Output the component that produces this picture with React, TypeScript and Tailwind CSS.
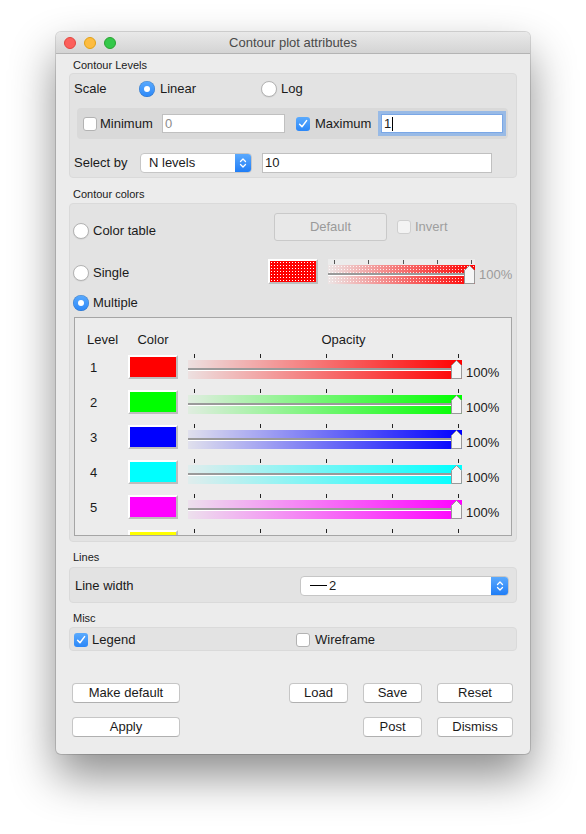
import React from "react";

const levels = [
  { n: 1, swatch: "bg-[#ff0000]", bar: "from-[rgba(255,0,0,0.05)] to-[#ff0000]" },
  { n: 2, swatch: "bg-[#00ff00]", bar: "from-[rgba(0,255,0,0.05)] to-[#00ff00]" },
  { n: 3, swatch: "bg-[#0000ff]", bar: "from-[rgba(0,0,255,0.05)] to-[#0000ff]" },
  { n: 4, swatch: "bg-[#00ffff]", bar: "from-[rgba(0,255,255,0.05)] to-[#00ffff]" },
  { n: 5, swatch: "bg-[#ff00ff]", bar: "from-[rgba(255,0,255,0.05)] to-[#ff00ff]" },
  { n: 6, swatch: "bg-[#ffff00]", bar: "from-[rgba(255,255,0,0.05)] to-[#ffff00]" },
];

function Radio({ checked }: { checked?: boolean }) {
  if (checked) {
    return (
      <span className="flex h-[16px] w-[16px] shrink-0 items-center justify-center rounded-full bg-linear-to-b from-[#5aaafd] to-[#2a87f8] shadow-[inset_0_0_0_0.5px_rgba(0,0,0,0.2)]">
        <span className="h-[6px] w-[6px] rounded-full bg-white" />
      </span>
    );
  }
  return <span className="h-[16px] w-[16px] shrink-0 rounded-full border border-[#b3b3b3] bg-white shadow-[0_0.5px_1px_rgba(0,0,0,0.1)]" />;
}

function Check({ checked, disabled }: { checked?: boolean; disabled?: boolean }) {
  if (checked) {
    return (
      <span className="flex h-[14px] w-[14px] shrink-0 items-center justify-center rounded-[3px] bg-linear-to-b from-[#5aaafd] to-[#2a87f8]">
        <svg width="10" height="10" viewBox="0 0 10 10">
          <path d="M1.6 5.2 L4 7.8 L8.6 1.6" fill="none" stroke="#fff" strokeWidth="1.5" strokeLinecap="round" strokeLinejoin="round" />
        </svg>
      </span>
    );
  }
  return (
    <span
      className={
        disabled
          ? "h-[14px] w-[14px] shrink-0 rounded-[3px] border border-[#cfcfcf] bg-[#f3f3f3]"
          : "h-[14px] w-[14px] shrink-0 rounded-[3px] border border-[#b3b3b3] bg-white"
      }
    />
  );
}

function Chevrons() {
  return (
    <svg width="8" height="12" viewBox="0 0 8 12">
      <path d="M1.5 4.5 L4 2 L6.5 4.5 M1.5 7.5 L4 10 L6.5 7.5" fill="none" stroke="#fff" strokeWidth="1.3" strokeLinecap="round" strokeLinejoin="round" />
    </svg>
  );
}

function Handle() {
  return (
    <svg width="11" height="19" viewBox="0 0 11 19" className="absolute right-0 top-0">
      <path d="M0.5 5.5 L5.5 0.5 L10.5 5.5 V18.5 H0.5 Z" fill="#f6f6f6" stroke="#999" strokeWidth="1" />
    </svg>
  );
}

function Ticks() {
  return (
    <div className="flex h-[4px] justify-between pl-[6px] pr-[3px]">
      <span className="w-px bg-[#222]" />
      <span className="w-px bg-[#222]" />
      <span className="w-px bg-[#222]" />
      <span className="w-px bg-[#222]" />
      <span className="w-px bg-[#222]" />
    </div>
  );
}

function Button({ label, w, disabled }: { label: string; w: string; disabled?: boolean }) {
  return (
    <div
      className={
        disabled
          ? `${w} flex h-[28px] items-center justify-center rounded-[3px] border border-[#c9c9c9] bg-[#e8e8e8] text-[#9a9a9a]`
          : `${w} flex h-[20px] items-center justify-center rounded-[4px] border border-[#c6c6c6] border-b-[#b0b0b0] bg-white text-[#1a1a1a]`
      }
    >
      {label}
    </div>
  );
}

function Label({ text, pad }: { text: string; pad: string }) {
  return <div className={`${pad} flex items-center pl-[4px] text-[11px] text-[#1a1a1a]`}>{text}</div>;
}

export default function App() {
  return (
    <div className="h-[834px] w-[586px] bg-white pl-[56px] pt-[32px] text-[13px] text-[#1a1a1a] [font-family:'Liberation_Sans',Arial,sans-serif]">
      <div className="flex h-[722px] w-[474px] flex-col overflow-hidden rounded-[5px] bg-[#ececec] shadow-[0_0_0_1px_rgba(0,0,0,0.14),0_22px_45px_rgba(0,0,0,0.45)]">
        {/* title bar */}
        <div className="grid h-[22px] shrink-0 grid-cols-[1fr_auto_1fr] items-center border-b border-[#b4b4b4] bg-linear-to-b from-[#e9e9e9] to-[#d4d4d4]">
          <div className="flex gap-[8px] pl-[8px]">
            <span className="h-[12px] w-[12px] rounded-full border border-[#e2463f] bg-[#fc605c]" />
            <span className="h-[12px] w-[12px] rounded-full border border-[#e1a116] bg-[#fdbc40]" />
            <span className="h-[12px] w-[12px] rounded-full border border-[#2aa231] bg-[#34c84a]" />
          </div>
          <div className="text-[13px] text-[#4a4a4a]">Contour plot attributes</div>
          <div />
        </div>

        <div className="flex flex-col pl-[13px]">
          <Label text="Contour Levels" pad="h-[19px] pt-[3px]" />
          <div className="h-[105px] w-[448px] rounded-[4px] border border-[#dadada] bg-[#e3e3e3] pt-[5px]">
            <div className="flex h-[20px] items-center pl-[4px]">
              <span className="w-[65px]">Scale</span>
              <span className="flex w-[122px] items-center gap-[5px]">
                <Radio checked />
                Linear
              </span>
              <span className="flex items-center gap-[4px]">
                <Radio />
                Log
              </span>
            </div>
            <div className="ml-[7px] mt-[9px] flex h-[31px] w-[431px] items-center rounded-[4px] bg-[#d9d9d9] pl-[6px]">
              <span className="flex w-[79px] items-center gap-[3px]">
                <Check />
                Minimum
              </span>
              <div className="flex h-[19px] w-[123px] items-center border border-[#c0c0c0] bg-white pl-[2px] text-[#8c8c8c]">0</div>
              <span className="ml-[11px] flex w-[85px] items-center gap-[5px]">
                <Check checked />
                Maximum
              </span>
              <div className="flex h-[19px] w-[122px] items-center border border-[#7aa7e6] bg-white pl-[2px] shadow-[0_0_0_3px_rgba(98,160,240,0.55)]">
                1<span className="ml-[1px] h-[14px] w-px bg-black" />
              </div>
            </div>
            <div className="mt-[14px] flex items-center pl-[4px]">
              <span className="w-[66px]">Select by</span>
              <div className="flex h-[20px] w-[112px] items-center overflow-hidden rounded-[4px] border border-[#c6c6c6] bg-white">
                <span className="flex-1 pl-[8px]">N levels</span>
                <span className="flex h-full w-[16px] items-center justify-center bg-linear-to-b from-[#5aa9fd] to-[#1e7df6]">
                  <Chevrons />
                </span>
              </div>
              <div className="ml-[10px] flex h-[20px] w-[230px] items-center border border-[#c0c0c0] bg-white pl-[2px]">10</div>
            </div>
          </div>

          <Label text="Contour colors" pad="h-[25px] pt-[7px]" />
          <div className="h-[339px] w-[448px] rounded-[4px] border border-[#dadada] bg-[#e3e3e3] pt-[9px]">
            <div className="flex h-[28px] items-start pl-[3px]">
              <span className="mt-[10px] flex h-[16px] w-[201px] items-center gap-[4px]">
                <Radio />
                Color table
              </span>
              <Button label="Default" w="w-[113px]" disabled />
              <span className="ml-[10px] mt-[7px] flex h-[14px] items-center gap-[4px] text-[#9e9e9e]">
                <Check disabled />
                Invert
              </span>
            </div>
            <div className="mt-[18px] flex h-[25px] items-center pl-[3px]">
              <span className="mt-[2px] flex w-[195px] items-center gap-[4px]">
                <Radio />
                Single
              </span>
              <div className="h-[25px] w-[50px] border-2 border-white border-b-[#bdbdbd] border-r-[#bdbdbd] bg-[#ff0000] bg-[radial-gradient(circle,#ffffff_0.7px,transparent_0.9px)] bg-[length:3px_3px]" />
              <div className="ml-[10px] h-[25px] w-[147px] bg-[#ececec] pt-[1px]">
                <div className="flex h-[4px] justify-between pl-[6px] pr-[3px]">
                  <span className="w-px bg-[#555]" />
                  <span className="w-px bg-[#555]" />
                  <span className="w-px bg-[#555]" />
                  <span className="w-px bg-[#555]" />
                  <span className="w-px bg-[#555]" />
                </div>
                <div className="relative mt-[1px] h-[19px] bg-linear-to-r from-[rgba(255,0,0,0.03)] to-[#ff0000]">
                  <div className="absolute inset-0 bg-[radial-gradient(circle,rgba(255,255,255,0.85)_0.6px,transparent_0.9px)] bg-[length:3px_3px]" />
                  <div className="absolute left-0 right-[11px] top-[8px] h-[2px] bg-[#9a9a9a]" />
                  <div className="absolute left-0 right-[11px] top-[10px] h-px bg-white" />
                  <Handle />
                </div>
              </div>
              <span className="ml-[4px] mt-[6px] text-[#9b9b9b]">100%</span>
            </div>
            <div className="mt-[11px] flex h-[16px] items-center gap-[4px] pl-[3px]">
              <Radio checked />
              Multiple
            </div>

            <div className="ml-[4px] mt-[6px] h-[219px] w-[438px] overflow-hidden border border-[#a5a5a5] bg-[#ececec]">
              <div className="mt-[14px] flex h-[16px] items-center">
                <span className="w-[53px] pl-[12px]">Level</span>
                <span className="w-[50px] text-center">Color</span>
                <span className="ml-[10px] w-[311px] text-center">Opacity</span>
              </div>
              <div className="mt-[4px]">
                {levels.map((lv) => (
                  <div key={lv.n} className="flex h-[35px] items-start">
                    <span className="flex h-[31px] w-[53px] items-center pl-[15px]">{lv.n < 6 ? lv.n : ""}</span>
                    <div className={`mt-[3px] h-[24px] w-[50px] border-2 border-white border-b-[#bdbdbd] border-r-[#bdbdbd] ${lv.swatch}`} />
                    <div className="ml-[10px] w-[274px] pt-[2px]">
                      <Ticks />
                      <div className={`relative mt-[2px] h-[19px] bg-linear-to-r ${lv.bar}`}>
                        <div className="absolute left-0 right-[11px] top-[8px] h-[2px] bg-[#9a9a9a]" />
                        <div className="absolute left-0 right-[11px] top-[10px] h-px bg-white" />
                        <Handle />
                      </div>
                    </div>
                    {lv.n < 6 && <span className="ml-[4px] mt-[11px]">100%</span>}
                  </div>
                ))}
              </div>
            </div>
          </div>

          <Label text="Lines" pad="h-[25px] pt-[5px]" />
          <div className="flex h-[36px] w-[448px] items-center justify-between rounded-[4px] border border-[#dadada] bg-[#e3e3e3] pl-[5px] pr-[7px] pt-[1px]">
            <span>Line width</span>
            <div className="flex h-[20px] w-[209px] items-center overflow-hidden rounded-[4px] border border-[#c6c6c6] bg-white">
              <span className="flex flex-1 items-center pl-[9px]">
                <span className="h-px w-[17px] bg-black" />
                <span className="ml-[2px]">2</span>
              </span>
              <span className="flex h-full w-[17px] items-center justify-center bg-linear-to-b from-[#5aa9fd] to-[#1e7df6]">
                <Chevrons />
              </span>
            </div>
          </div>

          <Label text="Misc" pad="h-[24px] pt-[6px]" />
          <div className="flex h-[24px] w-[448px] items-center rounded-[4px] border border-[#dadada] bg-[#e3e3e3] pl-[4px] pt-[2px]">
            <span className="flex w-[222px] items-center gap-[4px]">
              <Check checked />
              Legend
            </span>
            <span className="flex items-center gap-[5px]">
              <Check />
              Wireframe
            </span>
          </div>

          <div className="ml-[3px] mt-[32px] flex">
            <Button label="Make default" w="w-[108px]" />
            <div className="ml-[109px]">
              <Button label="Load" w="w-[59px]" />
            </div>
            <div className="ml-[15px]">
              <Button label="Save" w="w-[59px]" />
            </div>
            <div className="ml-[15px]">
              <Button label="Reset" w="w-[76px]" />
            </div>
          </div>
          <div className="ml-[3px] mt-[14px] flex">
            <Button label="Apply" w="w-[108px]" />
            <div className="ml-[183px]">
              <Button label="Post" w="w-[59px]" />
            </div>
            <div className="ml-[15px]">
              <Button label="Dismiss" w="w-[76px]" />
            </div>
          </div>
        </div>
      </div>
    </div>
  );
}
